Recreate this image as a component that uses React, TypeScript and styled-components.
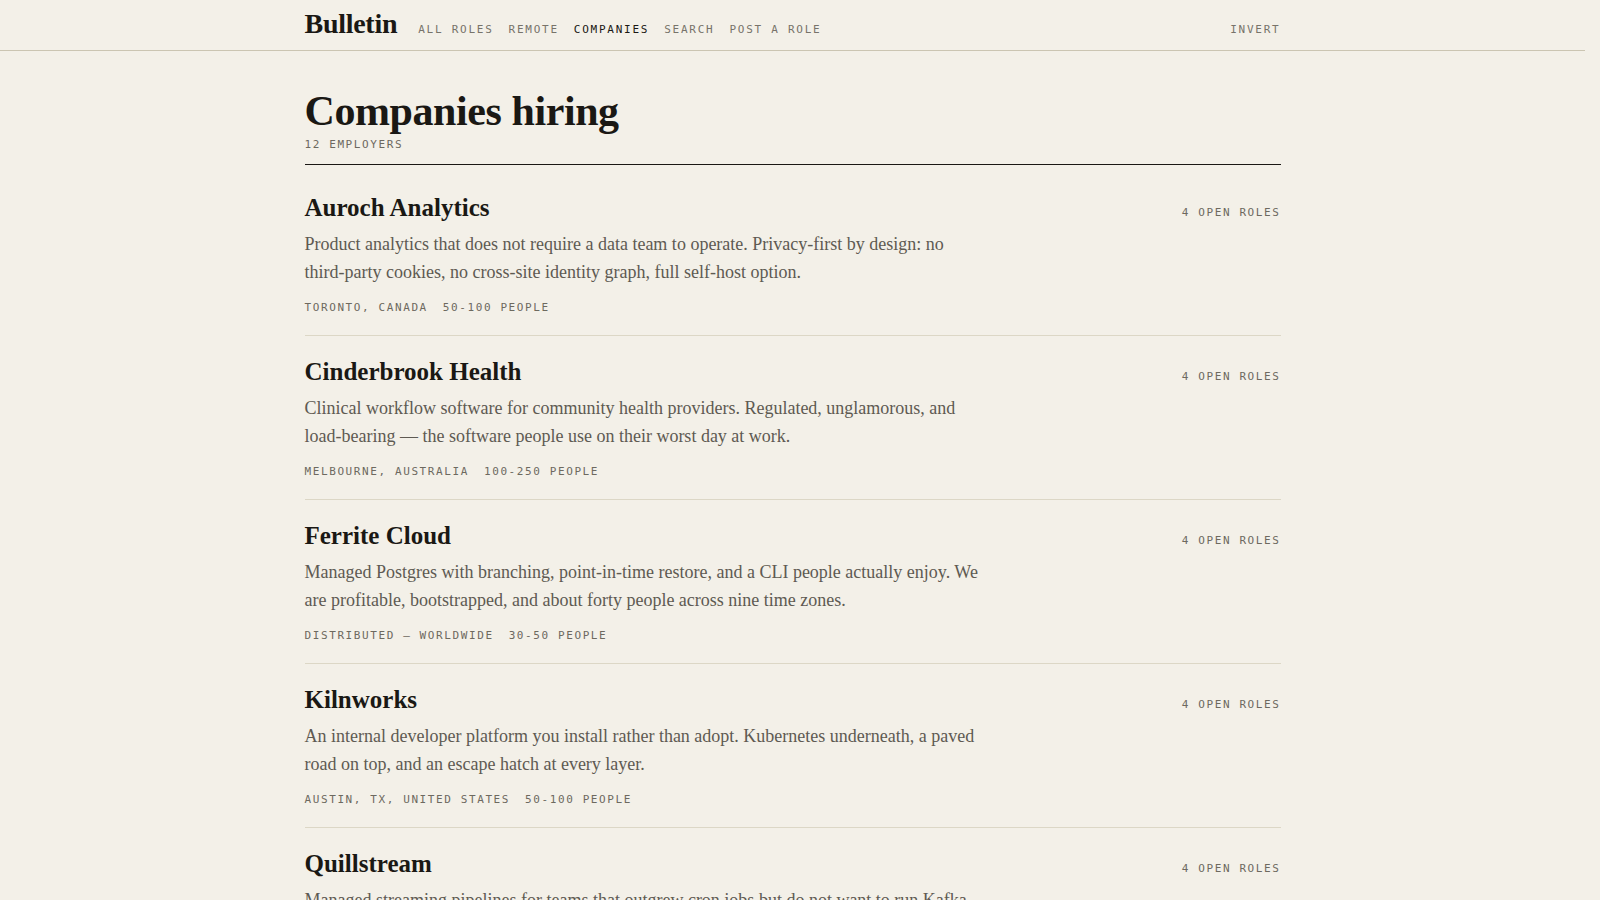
import styled, { createGlobalStyle } from 'styled-components';

const GlobalStyle = createGlobalStyle`
  html, body {
    margin: 0;
    padding: 0;
    background: #f3f0e8;
    color: #1a1814;
  }
  * { box-sizing: border-box; }
`;

const mono = `'DejaVu Sans Mono', 'Liberation Mono', monospace`;
const serif = `'Liberation Serif', 'DejaVu Serif', serif`;

const Page = styled.div`
  width: calc(100% - 15px);
`;

const Header = styled.header`
  height: 51px;
  border-bottom: 1px solid #cbc5b2;
`;

const HeaderInner = styled.div`
  max-width: 976px;
  height: 100%;
  margin: 0 auto;
  display: flex;
  align-items: baseline;
  padding-top: 8px;
`;

const Logo = styled.a`
  font-family: ${serif};
  font-weight: 700;
  font-size: 28px;
  letter-spacing: -0.01em;
  color: #1a1814;
  text-decoration: none;
  margin-right: 21px;
`;

const Nav = styled.nav`
  display: flex;
  gap: 15px;
`;

const NavLink = styled.a<{ $active?: boolean }>`
  font-family: ${mono};
  font-size: 11px;
  letter-spacing: 1.75px;
  text-transform: uppercase;
  color: ${p => (p.$active ? '#1a1814' : '#77736a')};
  text-decoration: none;
`;

const Invert = styled(NavLink)`
  margin-left: auto;
`;

const Main = styled.main`
  max-width: 976px;
  margin: 0 auto;
  padding: 37px 0 60px;
`;

const Title = styled.h1`
  margin: 0;
  font-family: ${serif};
  font-weight: 700;
  font-size: 42px;
  line-height: 1.1;
  letter-spacing: -0.01em;
`;

const Sub = styled.div`
  font-family: ${mono};
  font-size: 11px;
  line-height: 16px;
  letter-spacing: 1.6px;
  color: #6d695f;
  margin-top: 3px;
  padding-bottom: 11px;
  border-bottom: 1.5px solid #1a1814;
`;

const List = styled.ul`
  list-style: none;
  margin: 7px 0 0;
  padding: 0;
`;

const Row = styled.li`
  padding: 22px 0 19px;
  border-bottom: 1px solid #dcd7c6;
`;

const RowHead = styled.div`
  display: flex;
  justify-content: space-between;
  align-items: baseline;
`;

const Name = styled.h2`
  margin: 0;
  font-family: ${serif};
  font-weight: 700;
  font-size: 25px;
  line-height: 28px;
`;

const Roles = styled.span`
  font-family: ${mono};
  font-size: 11px;
  letter-spacing: 1.6px;
  color: #6d695f;
`;

const Desc = styled.p`
  margin: 9px 0 0;
  max-width: 680px;
  font-family: ${serif};
  font-size: 18px;
  line-height: 27.5px;
  color: #5e5a52;
`;

const Meta = styled.div`
  display: flex;
  gap: 15px;
  margin-top: 14px;
  font-family: ${mono};
  font-size: 11px;
  line-height: 16px;
  letter-spacing: 1.6px;
  text-transform: uppercase;
  color: #6d695f;
`;

type Company = {
  name: string;
  blurb: string;
  place: string;
  size: string;
  roles: number;
};

const companies: Company[] = [
  {
    name: 'Auroch Analytics',
    blurb:
      'Product analytics that does not require a data team to operate. Privacy-first by design: no third-party cookies, no cross-site identity graph, full self-host option.',
    place: 'Toronto, Canada',
    size: '50-100 people',
    roles: 4,
  },
  {
    name: 'Cinderbrook Health',
    blurb:
      'Clinical workflow software for community health providers. Regulated, unglamorous, and load-bearing — the software people use on their worst day at work.',
    place: 'Melbourne, Australia',
    size: '100-250 people',
    roles: 4,
  },
  {
    name: 'Ferrite Cloud',
    blurb:
      'Managed Postgres with branching, point-in-time restore, and a CLI people actually enjoy. We are profitable, bootstrapped, and about forty people across nine time zones.',
    place: 'Distributed — Worldwide',
    size: '30-50 people',
    roles: 4,
  },
  {
    name: 'Kilnworks',
    blurb:
      'An internal developer platform you install rather than adopt. Kubernetes underneath, a paved road on top, and an escape hatch at every layer.',
    place: 'Austin, TX, United States',
    size: '50-100 people',
    roles: 4,
  },
  {
    name: 'Quillstream',
    blurb:
      'Managed streaming pipelines for teams that outgrew cron jobs but do not want to run Kafka themselves. Exactly-once delivery, boring on purpose.',
    place: 'Berlin, Germany',
    size: '30-50 people',
    roles: 4,
  },
  {
    name: 'Saltmarsh Labs',
    blurb:
      'Observability for small infrastructure teams. Logs, traces and metrics in one place, priced by host rather than by the byte.',
    place: 'Lisbon, Portugal',
    size: '10-30 people',
    roles: 3,
  },
];

export default function App() {
  return (
    <Page>
      <GlobalStyle />
      <Header>
        <HeaderInner>
          <Logo href="#">Bulletin</Logo>
          <Nav>
            <NavLink href="#">All roles</NavLink>
            <NavLink href="#">Remote</NavLink>
            <NavLink href="#" $active>Companies</NavLink>
            <NavLink href="#">Search</NavLink>
            <NavLink href="#">Post a role</NavLink>
          </Nav>
          <Invert href="#">Invert</Invert>
        </HeaderInner>
      </Header>
      <Main>
        <Title>Companies hiring</Title>
        <Sub>12 EMPLOYERS</Sub>
        <List>
          {companies.map(c => (
            <Row key={c.name}>
              <RowHead>
                <Name>{c.name}</Name>
                <Roles>{c.roles} OPEN ROLES</Roles>
              </RowHead>
              <Desc>{c.blurb}</Desc>
              <Meta>
                <span>{c.place}</span>
                <span>{c.size}</span>
              </Meta>
            </Row>
          ))}
        </List>
      </Main>
    </Page>
  );
}
